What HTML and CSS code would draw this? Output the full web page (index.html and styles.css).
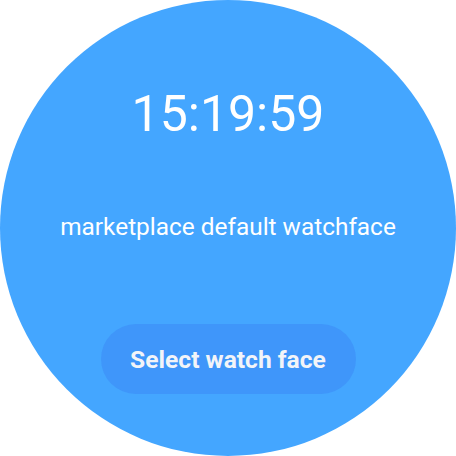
FILE: index.html
```html
<!DOCTYPE html>
<html>
<head>
<meta charset="utf-8">
<link rel="stylesheet" href="styles.css">
</head>
<body>
<div class="watch">
  <div class="time">15:19:59</div>
  <div class="label">marketplace default watchface</div>
  <button class="select">Select watch face</button>
</div>
</body>
</html>
```
FILE: styles.css
```css
html, body {
  margin: 0;
  padding: 0;
  background: #ffffff;
}
.watch {
  width: 456px;
  height: 456px;
  border-radius: 50%;
  background: #44a6ff;
  display: flex;
  flex-direction: column;
  align-items: center;
  font-family: Roboto, "Noto Sans", sans-serif;
  color: #ffffff;
}
.time {
  margin-top: 85px;
  font-size: 50px;
  line-height: 58px;
  font-weight: 400;
}
.label {
  margin-top: 70px;
  font-size: 24.4px;
  line-height: 28px;
}
.select {
  margin-top: 83px;
  width: 255px;
  height: 70px;
  border: none;
  border-radius: 35px;
  background: #3f96fa;
  color: #f2f4f8;
  font-family: Roboto, "Noto Sans", sans-serif;
  font-weight: 700;
  font-size: 24.6px;
  padding: 0;
}
```
